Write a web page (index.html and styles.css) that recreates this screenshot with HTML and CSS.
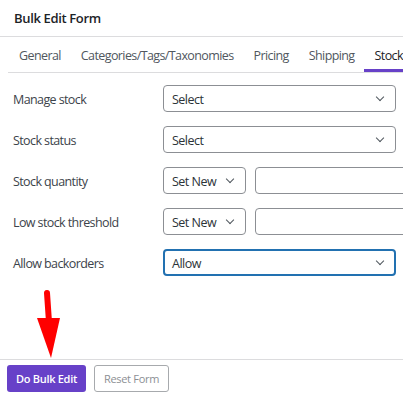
FILE: index.html
```html
<!DOCTYPE html>
<html lang="en">

<head>
    <meta charset="UTF-8">
    <meta name="viewport" content="width=device-width, initial-scale=1.0">
    <link rel="stylesheet" href="styles.css">
    <title>Bulk Edit Form</title>
</head>

<body>
    <div class="modal">
        <div class="modal-header">
            <h1>Bulk Edit Form</h1>
        </div>

        <div class="tabs">
            <a class="tab">General</a>
            <a class="tab">Categories/Tags/Taxonomies</a>
            <a class="tab">Pricing</a>
            <a class="tab">Shipping</a>
            <a class="tab active">Stock</a>
        </div>

        <div class="form">
            <div class="form-row">
                <label>Manage stock</label>
                <div class="select wide"><span>Select</span></div>
            </div>
            <div class="form-row">
                <label>Stock status</label>
                <div class="select wide"><span>Select</span></div>
            </div>
            <div class="form-row">
                <label>Stock quantity</label>
                <div class="select small"><span>Set New</span></div>
                <input type="text" class="text-input">
            </div>
            <div class="form-row">
                <label>Low stock threshold</label>
                <div class="select small"><span>Set New</span></div>
                <input type="text" class="text-input">
            </div>
            <div class="form-row">
                <label>Allow backorders</label>
                <div class="select wide focused"><span>Allow</span></div>
            </div>
        </div>

        <div class="modal-footer">
            <button class="btn-primary">Do Bulk Edit</button>
            <button class="btn-secondary">Reset Form</button>
        </div>

        <!-- red annotation arrow pointing at the submit button -->
        <svg class="arrow" width="30" height="72" viewBox="0 0 30 72">
            <line x1="11" y1="5" x2="13" y2="34" stroke="#ff0000" stroke-width="6" stroke-linecap="round" />
            <polygon points="1,30 24,30 15,70" fill="#ff0000" />
        </svg>
    </div>
</body>

</html>
```

FILE: styles.css
```css
* {
    margin: 0;
    padding: 0;
    box-sizing: border-box;
}

body {
    width: 403px;
    height: 397px;
    overflow: hidden;
    background: #fff;
    font-family: 'Open Sans', 'Noto Sans', sans-serif;
    color: #2c3338;
}

.modal {
    position: relative;
    height: 397px;
    display: flex;
    flex-direction: column;
    overflow: hidden;
}

.modal-header {
    height: 37px;
    padding: 9px 14px 0;
    border-bottom: 1px solid #dcdcde;
}

.modal-header h1 {
    font-size: 13px;
    font-weight: 600;
    color: #1d2327;
    letter-spacing: -0.35px;
}

.tabs {
    display: flex;
    margin-left: 8px;
    height: 36px;
    border-bottom: 1px solid #dcdcde;
    white-space: nowrap;
}

.tab {
    flex-shrink: 0;
    padding: 10px 9px 0 11px;
    font-size: 12.5px;
    color: #50575e;
    letter-spacing: -0.6px;
}

.tab.active {
    color: #1d2327;
    border-bottom: 3px solid #6741c8;
    padding-right: 20px;
}

.form {
    padding: 12px 0 0 13px;
    display: flex;
    flex-direction: column;
    gap: 14px;
}

.form-row {
    display: flex;
    align-items: center;
    height: 27px;
}

.form-row label {
    width: 150px;
    flex-shrink: 0;
    padding-top: 2px;
    font-size: 12.5px;
    color: #3c434a;
    letter-spacing: -0.6px;
}

.select {
    position: relative;
    flex-shrink: 0;
    height: 27px;
    border: 1px solid #8c8f94;
    border-radius: 4px;
    padding: 5px 0 0 8px;
    font-size: 12.5px;
    letter-spacing: -0.5px;
    color: #2c3338;
}

.select::after {
    content: '';
    position: absolute;
    right: 12px;
    top: 8px;
    width: 5px;
    height: 5px;
    border-right: 1.3px solid #50575e;
    border-bottom: 1.3px solid #50575e;
    transform: rotate(45deg);
}

.select.wide {
    width: 233px;
}

.select.small {
    width: 83px;
}

.select.focused {
    border: 2px solid #2271b1;
    padding: 4px 0 0 7px;
}

.select.focused::after {
    right: 11px;
    top: 7px;
}

.text-input {
    margin-left: 9px;
    width: 200px;
    flex-shrink: 0;
    height: 27px;
    border: 1px solid #8c8f94;
    border-radius: 4px;
    outline: none;
}

.modal-footer {
    margin-top: auto;
    border-top: 1px solid #dcdcde;
    padding: 5px 7px;
    display: flex;
    gap: 8px;
}

.modal-footer button {
    height: 27px;
    border-radius: 3px;
    font-family: 'Open Sans', 'Noto Sans', sans-serif;
    font-size: 11px;
    letter-spacing: -0.3px;
}

.btn-primary {
    width: 79px;
    background: #6741c8;
    color: #fff;
    font-weight: 600;
    border: none;
}

.btn-secondary {
    width: 75px;
    background: #fff;
    color: #8c8f94;
    border: 1px solid #a7aaad;
}

.arrow {
    position: absolute;
    left: 36px;
    top: 288px;
}
```
